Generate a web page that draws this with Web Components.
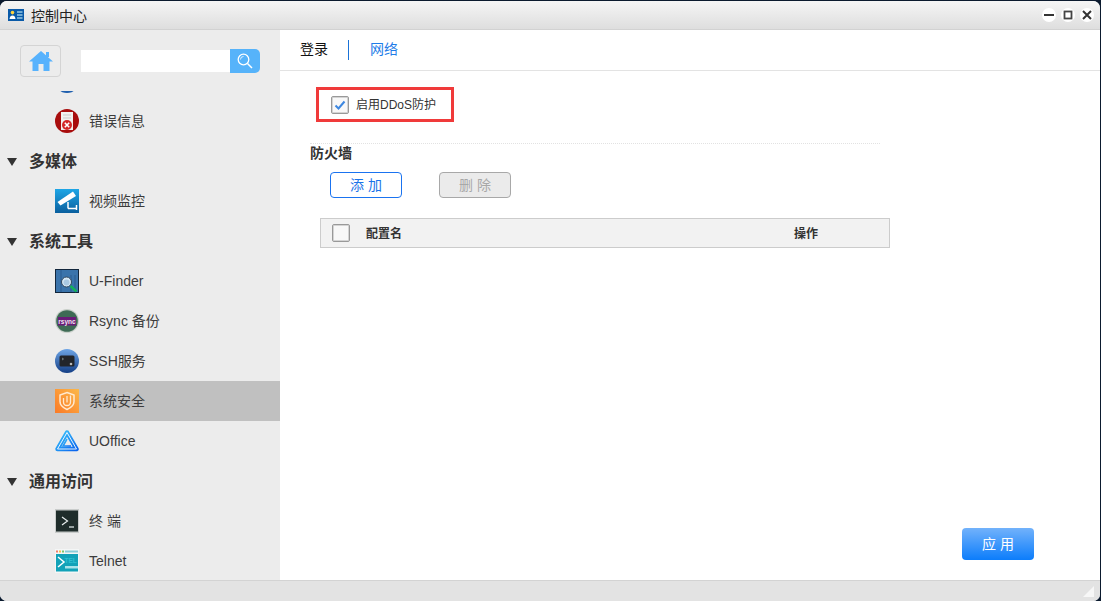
<!DOCTYPE html>
<html lang="zh">
<head>
<meta charset="utf-8">
<title>控制中心</title>
<style>
html, body { margin: 0; height: 100%; overflow: hidden; }
body {
	background: #0b1a2e;
	font-family: "Liberation Sans", "Noto Sans CJK SC", sans-serif;
	color: #333;
}
svg { display: block; }
</style>
</head>
<body>
<control-window>
	<title-bar slot="title" text="控制中心">
		<svg slot="icon" width="16" height="12" viewBox="0 0 16 12"><rect width="16" height="12" fill="#0a5aa8"/><circle cx="4.500" cy="3.600" r="1.800" fill="#ffd23c"/><path d="M1.500 10c.3-2.600 1.400-3.600 3-3.600s2.700 1 3 3.600z" fill="#fff"/><path d="M9 3h5.500M9 6h5.500M9 9h5.500" stroke="#dff" stroke-width="1"/></svg>
	</title-bar>

	<side-nav slot="side">
		<svg slot="home" width="24" height="20" viewBox="0 0 24 20"><path d="M12 0 L24 10.500 H20.500 V20 H14.500 V13 H9.500 V20 H3.500 V10.500 H0 Z" fill="#57b2fd"/><rect x="17" y="1" width="3" height="5" fill="#57b2fd"/></svg>

		<nav-item><svg slot="icon" width="24" height="24"><circle cx="12" cy="12" r="12" fill="#1f5fae"/></svg></nav-item>
		<nav-item>错误信息<svg slot="icon" width="24" height="24" viewBox="0 0 24 24"><circle cx="12" cy="12" r="12" fill="#a80d0d"/><path d="M6 3h12v18H6z" fill="#f2f0ee"/><path d="M8 6h8M8 9h8" stroke="#c9c9c9"/><circle cx="12" cy="16" r="5" fill="#d32727"/><path d="M9.800 13.800l4.400 4.400m0-4.400l-4.400 4.400" stroke="#fff" stroke-width="1.600"/></svg></nav-item>
		<nav-heading>多媒体</nav-heading>
		<nav-item>视频监控<svg slot="icon" width="24" height="24" viewBox="0 0 24 24"><defs><linearGradient id="cam" x1="0" y1="0" x2="0" y2="1"><stop offset="0" stop-color="#1ea6e6"/><stop offset="1" stop-color="#0a5f9e"/></linearGradient></defs><rect width="24" height="24" fill="url(#cam)"/><path d="M2.500 13L18 2.500l3 4.500L5.500 16.500z" fill="#fff"/><path d="M13 13v6.500M13 19.500h8.500M21.500 16v5" fill="none" stroke="#fff" stroke-width="1.500"/></svg></nav-item>
		<nav-heading>系统工具</nav-heading>
		<nav-item>U-Finder<svg slot="icon" width="24" height="24" viewBox="0 0 24 24"><rect width="24" height="24" fill="#12263c"/><rect x="1" y="1" width="22" height="22" fill="#3a73ab"/><path d="M6 1v22M16 6v17M20 6v17" stroke="#2b5c90"/><circle cx="11.500" cy="13" r="5" fill="#d5e7f5" stroke="#33475c"/><circle cx="11.500" cy="13.500" r="3" fill="#a9c8e2"/><path d="M15.500 17l6 5.500" stroke="#12b25a" stroke-width="2.400"/></svg></nav-item>
		<nav-item>Rsync 备份<svg slot="icon" width="24" height="24" viewBox="0 0 24 24"><circle cx="12" cy="12" r="12" fill="#c8cfc9"/><circle cx="12" cy="12" r="10.800" fill="#3e6b55"/><rect x="3" y="8" width="18" height="8.500" fill="#6a1b78"/><text x="12" y="14.500" font-size="6.500" fill="#f1e6f2" text-anchor="middle" font-family="Liberation Sans" font-weight="700">rsync</text></svg></nav-item>
		<nav-item>SSH服务<svg slot="icon" width="24" height="24" viewBox="0 0 24 24"><defs><linearGradient id="ssh" x1="0" y1="0" x2="0" y2="1"><stop offset="0" stop-color="#6ea5e6"/><stop offset="1" stop-color="#143f86"/></linearGradient></defs><circle cx="12" cy="12" r="12" fill="url(#ssh)"/><rect x="4.500" y="6.500" width="15" height="11" rx="1.500" fill="#22252a"/><path d="M7 9l1.500 1L7 11" stroke="#9aa" fill="none" stroke-width=".7"/><circle cx="16" cy="15" r="1.300" fill="#bbb"/></svg></nav-item>
		<nav-item selected>系统安全<svg slot="icon" width="24" height="24" viewBox="0 0 24 24"><defs><linearGradient id="sec" x1="0" y1="1" x2="1" y2="0"><stop offset="0" stop-color="#fb7a26"/><stop offset="1" stop-color="#fbb84a"/></linearGradient></defs><rect width="24" height="24" fill="url(#sec)"/><path d="M12 3.500l7 2.500v6.500c0 4-3.500 6.500-7 8-3.500-1.500-7-4-7-8V6z" fill="none" stroke="#ffe9cf" stroke-width="1.500"/><path d="M8.500 9v4c0 2.200 1.500 3.500 3.500 3.500s3.500-1.300 3.500-3.500V6.500M12 7v6.500" fill="none" stroke="#ffe9cf" stroke-width="1.300"/></svg></nav-item>
		<nav-item>UOffice<svg slot="icon" width="24" height="24" viewBox="0 0 24 24"><defs><linearGradient id="uo" x1="0" y1="0" x2="1" y2="1"><stop offset="0" stop-color="#3cc6fb"/><stop offset="1" stop-color="#0a66ee"/></linearGradient></defs><path d="M12 3.500L21.500 20H2.500z" fill="none" stroke="url(#uo)" stroke-width="4.500" stroke-linejoin="round"/><path d="M12 3.500L21.500 20H2.500z" fill="none" stroke="#fff" stroke-width=".9" stroke-linejoin="round"/><path d="M12 10L8 17h8" fill="none" stroke="url(#uo)" stroke-width="1.600"/></svg></nav-item>
		<nav-heading>通用访问</nav-heading>
		<nav-item>终 端<svg slot="icon" width="24" height="24" viewBox="0 0 24 24"><rect width="24" height="24" fill="#c9cccb"/><rect x="1" y="1.500" width="22" height="21" fill="#1f2d2b"/><path d="M7 8l5.500 4L7 16" fill="none" stroke="#e8eeee" stroke-width="1.200"/><path d="M14 18h5" stroke="#e8eeee" stroke-width="1.200"/></svg></nav-item>
		<nav-item>Telnet<svg slot="icon" width="24" height="24" viewBox="0 0 24 24"><rect width="24" height="24" fill="#f4f6f6"/><rect x="1" y="1.500" width="2" height="2" fill="#f47c6a"/><rect x="4" y="1.500" width="2" height="2" fill="#f4c44a"/><rect x="7" y="1.500" width="2" height="2" fill="#7ac76a"/><rect x="10" y="1.500" width="13" height="2" fill="#8ccdd8"/><rect x="1" y="5" width="22" height="17.500" fill="#12a2b8"/><path d="M3 8l6 5-6 5" fill="none" stroke="#fff" stroke-width="1.500"/><rect x="10" y="17" width="13" height="2.500" fill="#a8e3ea"/><text x="9.500" y="13.500" font-size="6.500" font-weight="700" font-family="Liberation Sans" fill="#2fc0d2">TEL</text></svg></nav-item>
	</side-nav>

	<security-page slot="main"></security-page>
</control-window>

<script>
// small helper so each element only has to pass its markup
class ShadowEl extends HTMLElement {
	constructor (html) {
		super();
		this.attachShadow({ mode: "open" });
		this.shadowRoot.innerHTML = html;
	}
}

class ControlWindow extends ShadowEl {
	constructor () {
		super(`
			<style>
				:host {
					display: grid;
					grid-template: 29px 1fr 21px / 280px 1fr;
					width: 1100px;
					height: 600px;
					margin-top: 1px;
					border-radius: 7px;
					overflow: hidden;
					background: #fff;
				}
				::slotted([slot="title"]) { grid-column: 1 / 3; }
				footer {
					grid-column: 1 / 3;
					display: flex;
					justify-content: flex-end;
					align-items: center;
					padding-right: 6px;
					background: #e3e3e3;
					border-top: 1px solid #d3d3d3;
				}
				footer div {
					width: 0;
					height: 0;
					border-left: 11px solid transparent;
					border-bottom: 11px solid #f7f7f7;
				}
			</style>
			<slot name="title"></slot>
			<slot name="side"></slot>
			<slot name="main"></slot>
			<footer><div></div></footer>
		`);
	}
}

class TitleBar extends ShadowEl {
	constructor () {
		super(`
			<style>
				:host {
					display: flex;
					align-items: center;
					box-sizing: border-box;
					padding: 0 6px 0 8px;
					background: linear-gradient(#f5f5f5, #dedede);
					border-bottom: 1px solid #d2d2d2;
					font-size: 14px;
					color: #222;
				}
				span { margin-left: 7px; flex: 1; }
				.ctl { display: flex; gap: 5px; margin-top: -1px; }
				.ctl i {
					display: flex;
					align-items: center;
					justify-content: center;
					width: 14px;
					height: 14px;
					border-radius: 50%;
					background: #fff;
				}
			</style>
			<slot name="icon"></slot>
			<span></span>
			<div class="ctl">
				<i><svg width="12" height="12"><path d="M1 6h10" stroke="#333" stroke-width="2"/></svg></i>
				<i><svg width="10" height="10"><rect x="1.500" y="1.500" width="7" height="7" fill="none" stroke="#444" stroke-width="1.800"/></svg></i>
				<i><svg width="10" height="10"><path d="M1 1l8 8M9 1l-8 8" stroke="#333" stroke-width="2"/></svg></i>
			</div>
		`);
	}
	connectedCallback () {
		this.shadowRoot.querySelector("span").textContent = this.getAttribute("text");
	}
}

class SideNav extends ShadowEl {
	constructor () {
		super(`
			<style>
				:host {
					display: flex;
					flex-direction: column;
					min-height: 0;
					overflow: hidden;
					background: #ececec;
				}
				header {
					flex: none;
					display: flex;
					align-items: center;
					height: 61px;
					padding: 0 20px;
					position: relative;
					z-index: 1;
					background: #ececec;
				}
				.home {
					display: flex;
					align-items: center;
					justify-content: center;
					box-sizing: border-box;
					width: 41px;
					height: 32px;
					border: 1px solid #d4d4d4;
					border-radius: 4px;
				}
				.search {
					display: flex;
					align-items: center;
					margin-left: 20px;
				}
				.search div { width: 149px; height: 22px; background: #fff; }
				.search button {
					display: flex;
					align-items: center;
					justify-content: center;
					width: 30px;
					height: 24px;
					padding: 0;
					border: 0;
					border-radius: 0 5px 5px 0;
					background: #56b3fa;
				}
				.list { margin-top: -30px; }
			</style>
			<header>
				<div class="home"><slot name="home"></slot></div>
				<div class="search">
					<div></div>
					<button><svg width="16" height="16" viewBox="0 0 16 16"><circle cx="6.500" cy="6.500" r="5.300" fill="none" stroke="#fff" stroke-width="1.300"/><path d="M10.500 10.500l4.500 4.500" stroke="#fff" stroke-width="1.500"/><path d="M3.500 6.500a3 3 0 0 1 3-3" fill="none" stroke="#fff" stroke-width=".8"/></svg></button>
				</div>
			</header>
			<div class="list"><slot></slot></div>
		`);
	}
}

class NavHeading extends ShadowEl {
	constructor () {
		super(`
			<style>
				:host {
					display: flex;
					align-items: center;
					box-sizing: border-box;
					height: 40px;
					padding: 2px 0 0 7px;
					font-size: 16px;
					line-height: 18px;
					font-weight: 700;
					color: #333;
				}
				i {
					width: 0;
					height: 0;
					margin-right: 12px;
					border-left: 5px solid transparent;
					border-right: 5px solid transparent;
					border-top: 8px solid #333;
				}
			</style>
			<i></i><slot></slot>
		`);
	}
}

class NavItem extends ShadowEl {
	constructor () {
		super(`
			<style>
				:host {
					display: flex;
					align-items: center;
					gap: 10px;
					height: 40px;
					padding-left: 55px;
					font-size: 14px;
					line-height: 18px;
					color: #3c3c3c;
				}
				:host([selected]) { background: #c0c0c0; }
			</style>
			<slot name="icon"></slot><slot></slot>
		`);
	}
}

class CheckBox extends ShadowEl {
	constructor () {
		super(`
			<style>
				:host {
					display: flex;
					align-items: center;
					justify-content: center;
					box-sizing: border-box;
					flex: none;
					width: 18px;
					height: 18px;
					background: #f8f8f8;
					border: 1px solid #999;
					border-radius: 2px;
					box-shadow: inset 0 0 0 1px #d4d4d4;
				}
				svg { display: none; }
				:host([checked]) svg { display: block; }
			</style>
			<svg width="12" height="10" viewBox="0 0 12 10"><path d="M1.500 5.500l3 3 6-7" fill="none" stroke="#3d87e0" stroke-width="2"/></svg>
		`);
	}
}

class PageButton extends ShadowEl {
	constructor () {
		super(`
			<style>
				:host {
					display: flex;
					align-items: center;
					justify-content: center;
					box-sizing: border-box;
					width: 72px;
					height: 26px;
					border: 1px solid #1a73f0;
					border-radius: 4px;
					background: #fff;
					color: #1a73e8;
					font-size: 14px;
					line-height: 18px;
				}
				:host([disabled]) {
					border-color: #a8a8a8;
					background: #ebebeb;
					color: #a8a8a8;
				}
				:host([primary]) {
					height: 32px;
					border: 0;
					background: linear-gradient(#72b2fb, #0c7dfb);
					color: #fff;
				}
			</style>
			<slot></slot>
		`);
	}
}

class SecurityPage extends ShadowEl {
	constructor () {
		super(`
			<style>
				:host {
					display: flex;
					flex-direction: column;
					min-height: 0;
					background: #fff;
					font-size: 12px;
					line-height: 16px;
					color: #333;
				}
				nav {
					display: flex;
					align-items: center;
					flex: none;
					box-sizing: border-box;
					height: 41px;
					padding-left: 20px;
					border-bottom: 1px solid #e3e3e3;
					font-size: 14px;
				}
				nav b { font-weight: 400; color: #111; margin-bottom: 2px; }
				nav i { width: 1px; height: 20px; margin: 0 21px 0 20px; background: #1a73d8; }
				nav a { color: #1f7de8; margin-bottom: 2px; }
				.ddos {
					display: flex;
					align-items: center;
					gap: 7px;
					box-sizing: border-box;
					width: 138px;
					height: 35px;
					margin: 16px 0 0 36px;
					padding-left: 12px;
					border: 3px solid #f03a3a;
				}
				.fw {
					margin: 21px 0 0 30px;
					width: 570px;
					border-top: 1px dotted #e2e2e2;
					font-size: 14px;
					font-weight: 700;
					line-height: 18px;
				}
				.btns { display: flex; gap: 37px; margin: 10px 0 0 50px; }
				.grid {
					display: grid;
					grid-template-columns: 11px 18px 16px 428px 1fr;
					align-items: center;
					box-sizing: border-box;
					width: 570px;
					height: 30px;
					margin: 20px 0 0 40px;
					background: #f2f2f2;
					border: 1px solid #ccc;
					font-weight: 700;
				}
				.grid check-box { grid-column: 2; }
				.grid span { padding-top: 2px; }
				.grid span:nth-of-type(1) { grid-column: 4; }
				.foot {
					display: flex;
					justify-content: flex-end;
					margin-top: auto;
					padding: 0 66px 20px 0;
				}
			</style>
			<nav><b>登录</b><i></i><a>网络</a></nav>
			<div class="ddos"><check-box checked></check-box><span>启用DDoS防护</span></div>
			<div class="fw">防火墙</div>
			<div class="btns">
				<page-button>添 加</page-button>
				<page-button disabled>删 除</page-button>
			</div>
			<div class="grid">
				<check-box></check-box>
				<span>配置名</span>
				<span>操作</span>
			</div>
			<div class="foot"><page-button primary>应 用</page-button></div>
		`);
	}
}

customElements.define("control-window", ControlWindow);
customElements.define("title-bar", TitleBar);
customElements.define("side-nav", SideNav);
customElements.define("nav-heading", NavHeading);
customElements.define("nav-item", NavItem);
customElements.define("check-box", CheckBox);
customElements.define("page-button", PageButton);
customElements.define("security-page", SecurityPage);
</script>
</body>
</html>
